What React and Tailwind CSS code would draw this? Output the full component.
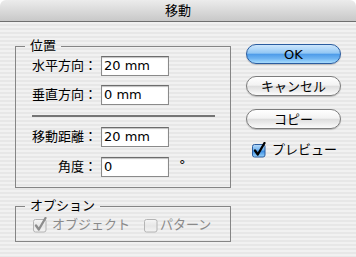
import React from "react";

function AquaCheck({ disabled = false, checked = true }) {
  const id = disabled ? "gd" : "gb";
  return (
    <svg width="15" height="16" viewBox="0 0 15 16" className="shrink-0 block">
      <defs>
        <linearGradient id={id} x1="0" y1="0" x2="0" y2="1">
          {disabled ? (
            <>
              <stop offset="0" stopColor="#f6f6f6" />
              <stop offset="0.5" stopColor="#e6e6e6" />
              <stop offset="1" stopColor="#f4f4f4" />
            </>
          ) : (
            <>
              <stop offset="0" stopColor="#b9dcfa" />
              <stop offset="0.45" stopColor="#6fb1ef" />
              <stop offset="0.55" stopColor="#3f90e4" />
              <stop offset="1" stopColor="#9ad4fb" />
            </>
          )}
        </linearGradient>
      </defs>
      <rect
        x="0.5"
        y="2.5"
        width="12.5"
        height="12.5"
        rx="2"
        fill={`url(#${id})`}
        stroke={disabled ? "#b4b4b4" : "#2c5d9e"}
      />
      {checked && (
        <path
          d="M3 8.5 L5.8 12.5 L12.5 1"
          fill="none"
          stroke={disabled ? "#8c8c8c" : "#000"}
          strokeWidth="2.3"
          strokeLinecap="round"
          strokeLinejoin="round"
        />
      )}
    </svg>
  );
}

function Field({ label, value, suffix }) {
  return (
    <div className="flex items-center h-[20px]">
      <div className="w-[81px] text-right leading-[20px] whitespace-nowrap">{label}</div>
      <div className="ml-[4px] w-[68px] h-[20px] bg-white border border-[#8a8a8a] border-t-[#6c6c6c] shadow-[inset_0_1px_1px_rgba(0,0,0,0.25)] pl-[2px] leading-[18px] text-black">
        {value}
      </div>
      {suffix && <div className="ml-[10px] leading-[18px] -mt-[4px]">{suffix}</div>}
    </div>
  );
}

function AquaButton({ children, primary = false, className = "" }) {
  return (
    <div
      className={
        "w-[95px] h-[20px] rounded-full flex items-center justify-center leading-none shadow-[0_1px_1px_rgba(0,0,0,0.2)] " +
        (primary
          ? "border border-[#2a5c9f] bg-[linear-gradient(to_bottom,#cde6fc_0%,#92c7f4_45%,#4e9ce9_52%,#6eb4f2_75%,#a8dcfd_100%)] "
          : "border border-[#7c7c7c] bg-[linear-gradient(to_bottom,#ffffff_0%,#f3f3f3_45%,#dedede_52%,#ececec_75%,#fbfbfb_100%)] ") +
        className
      }
    >
      {children}
    </div>
  );
}

export default function App() {
  return (
    <div className="w-[356px] h-[257px] bg-white text-[13px] text-black font-['DejaVu_Sans','Noto_Sans_CJK_JP',sans-serif] overflow-hidden">
      <div className="h-[22px] rounded-t-[6px] bg-[linear-gradient(to_bottom,#ececec,#c8c8c8)] border-b border-[#6f6f6f] flex items-center justify-center leading-none">
        移動
      </div>
      <div className="h-[235px] flex bg-[repeating-linear-gradient(to_bottom,#f1f1f1_0px,#f1f1f1_2px,#e7e7e7_2px,#e7e7e7_4px)]">
        <div className="pl-[15px] pt-[16px] w-[231px] flex flex-col">
          <fieldset className="w-[216px] border border-[#858585] pb-[10px]">
            <legend className="ml-[9px] px-[5px] leading-[16px]">位置</legend>
            <div className="mt-[2px]">
              <Field label="水平方向：" value="20 mm" />
            </div>
            <div className="mt-[9px]">
              <Field label="垂直方向：" value="0 mm" />
            </div>
            <div className="mt-[10px] ml-[16px] w-[183px] h-[2px] bg-[#747474]" />
            <div className="mt-[10px]">
              <Field label="移動距離：" value="20 mm" />
            </div>
            <div className="mt-[10px]">
              <Field label="角度：" value="0" suffix="°" />
            </div>
          </fieldset>
          <fieldset className="mt-[10px] w-[216px] border border-[#858585] pb-[9px]">
            <legend className="ml-[9px] px-[5px] leading-[16px]">オプション</legend>
            <div className="mt-[3px] flex items-center h-[15px] text-[#8a8a8a]">
              <div className="ml-[17px]">
                <AquaCheck disabled checked />
              </div>
              <span className="ml-[4px] leading-[15px] whitespace-nowrap">オブジェクト</span>
              <div className="ml-[14px]">
                <AquaCheck disabled checked={false} />
              </div>
              <span className="ml-[1px] leading-[15px] whitespace-nowrap">パターン</span>
            </div>
          </fieldset>
        </div>
        <div className="ml-[15px] pt-[22px] flex flex-col">
          <AquaButton primary>OK</AquaButton>
          <AquaButton className="mt-[12px]">キャンセル</AquaButton>
          <AquaButton className="mt-[13px]">コピー</AquaButton>
          <div className="mt-[13px] ml-[6px] flex items-center">
            <AquaCheck />
            <span className="ml-[5px] leading-[16px]">プレビュー</span>
          </div>
        </div>
      </div>
    </div>
  );
}
